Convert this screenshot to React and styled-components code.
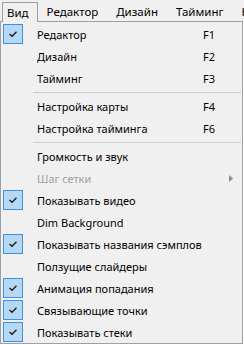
import styled, { createGlobalStyle } from "styled-components";

const GlobalStyle = createGlobalStyle`
  html, body {
    margin: 0;
    padding: 0;
    background: #ffffff;
  }
  body {
    font-family: "Noto Sans", "Open Sans", sans-serif;
    font-size: 11px;
    color: #000;
  }
`;

const topMenus = ["Вид", "Редактор", "Дизайн", "Тайминг", "Настройки"];

const groups = [
  [
    { label: "Редактор", shortcut: "F1", checked: true },
    { label: "Дизайн", shortcut: "F2" },
    { label: "Тайминг", shortcut: "F3" },
  ],
  [
    { label: "Настройка карты", shortcut: "F4" },
    { label: "Настройка тайминга", shortcut: "F6" },
  ],
  [
    { label: "Громкость и звук" },
    { label: "Шаг сетки", disabled: true, submenu: true },
    { label: "Показывать видео", checked: true },
    { label: "Dim Background" },
    { label: "Показывать названия сэмплов", checked: true },
    { label: "Ползущие слайдеры" },
    { label: "Анимация попадания", checked: true },
    { label: "Связывающие точки", checked: true },
    { label: "Показывать стеки", checked: true },
  ],
];

function App() {
  return (
    <>
      <GlobalStyle />
      <Screen>
        <MenuBar>
          {topMenus.map((name, i) => (
            <BarItem key={name} $active={i === 0}>
              {name}
            </BarItem>
          ))}
        </MenuBar>
        <Popup>
          {groups.map((group, gi) => (
            <Group key={gi}>
              {gi > 0 && <Separator />}
              {group.map((item) => (
                <Row key={item.label} $disabled={item.disabled}>
                  <CheckCell>
                    {item.checked && (
                      <CheckBox>
                        <svg width="10" height="8" viewBox="0 0 10 8">
                          <path
                            d="M1.5 4 L4 6.3 L8.5 1.7"
                            fill="none"
                            stroke="#1a1a1a"
                            strokeWidth="1.3"
                          />
                        </svg>
                      </CheckBox>
                    )}
                  </CheckCell>
                  <Label>{item.label}</Label>
                  <Shortcut>{item.shortcut}</Shortcut>
                  <ArrowCell>
                    {item.submenu && (
                      <svg width="4" height="7" viewBox="0 0 4 7">
                        <path d="M0 0 L4 3.5 L0 7 Z" fill="#8c8c8c" />
                      </svg>
                    )}
                  </ArrowCell>
                </Row>
              ))}
            </Group>
          ))}
        </Popup>
      </Screen>
    </>
  );
}

const Screen = styled.div`
  width: 244px;
  height: 345px;
  overflow: hidden;
  display: flex;
  flex-direction: column;
`;

const MenuBar = styled.div`
  display: flex;
  height: 21px;
  padding: 2px 0 0 2px;
  box-sizing: border-box;
  background: #f0f0f0;
  white-space: nowrap;
  font-size: 11.5px;
`;

const BarItem = styled.div`
  display: flex;
  align-items: center;
  flex-shrink: 0;
  height: ${(p) => (p.$active ? "20px" : "19px")};
  padding: ${(p) => (p.$active ? "0 8px 1px 4px" : "0 9px")};
  border: ${(p) => (p.$active ? "1px solid #a0a0a0" : "none")};
  border-bottom: none;
  box-sizing: border-box;
  background: #f0f0f0;
  position: relative;
  z-index: ${(p) => (p.$active ? 1 : 0)};
  margin-bottom: ${(p) => (p.$active ? "-1px" : "0")};
`;

const Popup = styled.div`
  width: 243px;
  box-sizing: border-box;
  border: 1px solid #a0a0a0;
  padding: 1px 0 0;
  background: #f0f0f0;
  display: flex;
  flex-direction: column;
`;

const Group = styled.div`
  display: flex;
  flex-direction: column;
`;

const Separator = styled.div`
  height: 1px;
  margin: 3px 1px 2px 32px;
  background: #cfcfcf;
`;

const Row = styled.div`
  display: grid;
  grid-template-columns: 36px 1fr auto 27px;
  align-items: center;
  height: 22px;
  color: ${(p) => (p.$disabled ? "#a0a0a0" : "#000")};
  white-space: nowrap;
`;

const CheckCell = styled.div`
  display: flex;
  align-items: center;
  padding-left: 2px;
  height: 22px;
`;

const CheckBox = styled.div`
  width: 20px;
  height: 20px;
  box-sizing: border-box;
  border: 1px solid #3f92e0;
  background: #b5d8f5;
  display: flex;
  align-items: center;
  justify-content: center;
`;

const Label = styled.span`
  overflow: hidden;
`;

const Shortcut = styled.span``;

const ArrowCell = styled.div`
  display: flex;
  align-items: center;
  padding-left: 14px;
`;

export default App;
